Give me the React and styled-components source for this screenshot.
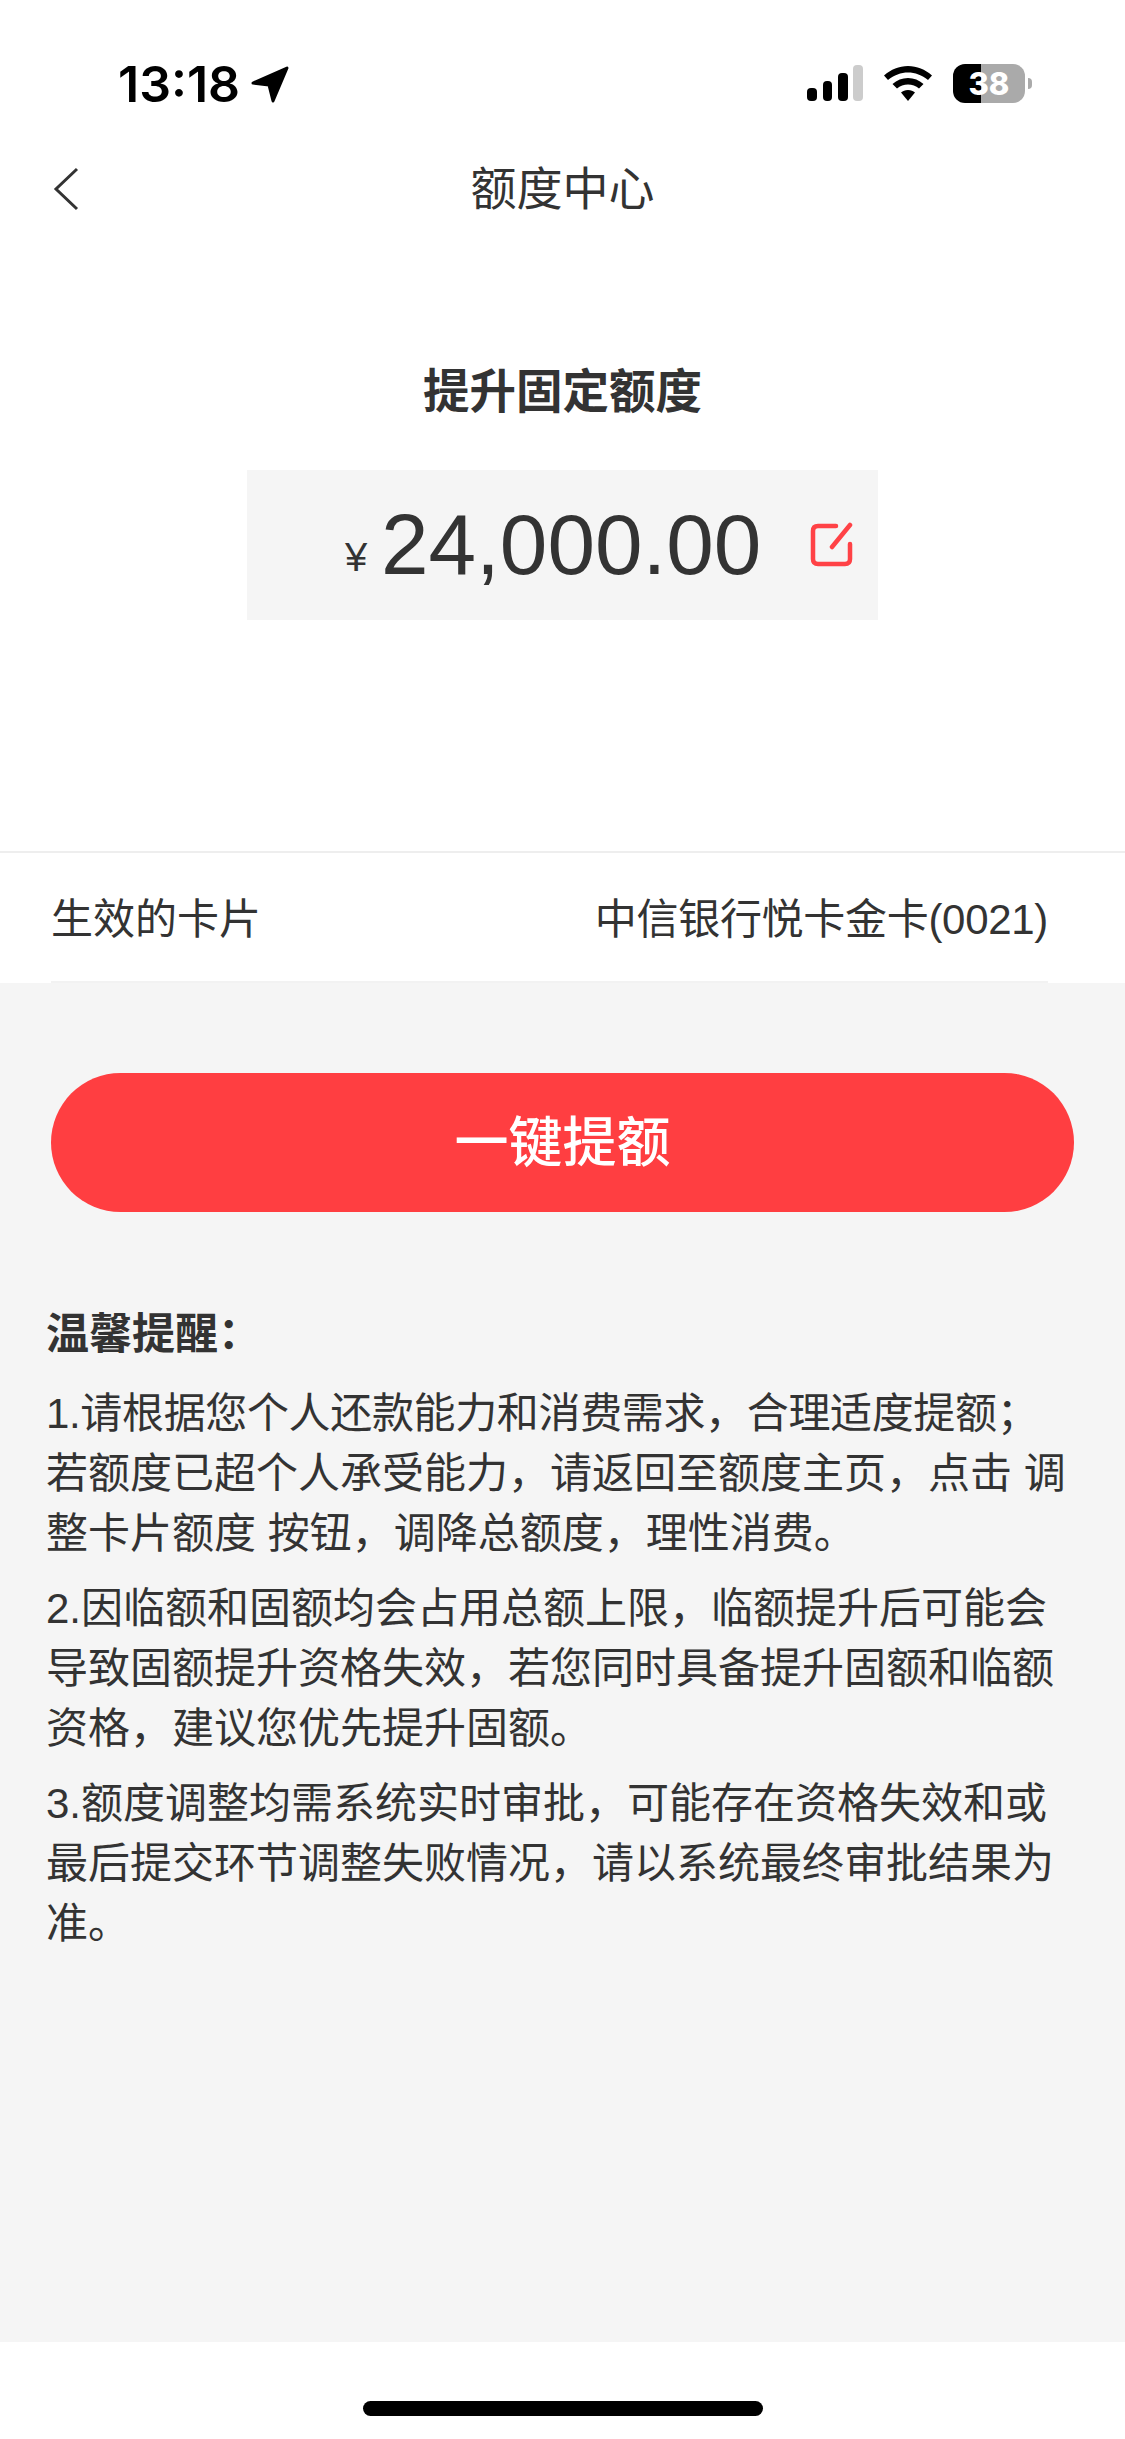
import React from "react";
import styled, { createGlobalStyle } from "styled-components";

const GlobalStyle = createGlobalStyle`
  html, body {
    margin: 0;
    padding: 0;
    background: #fff;
  }
  body {
    font-family: "Liberation Sans", "Noto Sans CJK SC", sans-serif;
    color: #333;
  }
`;

const Page = styled.div`
  width: 1125px;
  height: 2439px;
  display: flex;
  flex-direction: column;
  overflow: hidden;
  background: #fff;
`;

const StatusBar = styled.div`
  height: 146px;
  padding: 0 93px 0 118px;
  box-sizing: border-box;
  display: flex;
  justify-content: space-between;
  align-items: flex-start;
`;

const TimeGroup = styled.div`
  margin-top: 58px;
  display: flex;
  align-items: center;
  gap: 11px;
`;

const Time = styled.span`
  font-family: Inter, "Liberation Sans", sans-serif;
  font-size: 50px;
  line-height: 52px;
  font-weight: 600;
  color: #000;
`;

const StatusIcons = styled.div`
  margin-top: 64px;
  display: flex;
  align-items: center;
  gap: 21px;
`;

const BatteryWrap = styled.div`
  display: flex;
  align-items: center;
  gap: 3px;
`;

const Battery = styled.div`
  width: 72px;
  height: 39px;
  border-radius: 12px;
  background: linear-gradient(90deg, #000 39%, #aaa 39%);
  display: flex;
  align-items: center;
  justify-content: center;
  font-family: Inter, "Liberation Sans", sans-serif;
  font-size: 31px;
  font-weight: 800;
  color: #fff;
`;

const BatteryNub = styled.div`
  width: 4px;
  height: 11px;
  background: #aaa;
  border-radius: 0 5px 5px 0;
`;

const NavBar = styled.div`
  height: 84px;
  padding-bottom: 6px;
  box-sizing: border-box;
  position: relative;
  display: flex;
  align-items: center;
  justify-content: center;
`;

const BackIcon = styled.svg`
  position: absolute;
  left: 53px;
  top: 21px;
`;

const NavTitle = styled.div`
  font-size: 46px;
  font-weight: 400;
  color: #333;
`;

const Hero = styled.div`
  padding-top: 134px;
  height: 623px;
  box-sizing: border-box;
  display: flex;
  flex-direction: column;
  align-items: center;
  border-bottom: 2px solid #eeeeee;
`;

const HeroTitle = styled.div`
  font-size: 46.5px;
  line-height: 56px;
  font-weight: 700;
  color: #333;
`;

const AmountBox = styled.div`
  margin-top: 50px;
  width: 631px;
  height: 150px;
  background: #f5f5f5;
  display: flex;
  align-items: center;
  box-sizing: border-box;
  padding-left: 98px;
`;

const Currency = styled.span`
  font-size: 40px;
  line-height: 1;
  color: #333;
  margin-top: 24px;
  width: 36px;
`;

const Amount = styled.span`
  font-size: 85.5px;
  line-height: 1;
  color: #333;
`;

const EditIcon = styled.svg`
  margin-left: 48px;
  flex: none;
`;

const CardSection = styled.div`
  height: 130px;
  padding: 0 77px 0 51px;
  background: #fff;
`;

const CardRow = styled.div`
  height: 125px;
  padding-bottom: 3px;
  display: flex;
  justify-content: space-between;
  align-items: center;
  border-bottom: 2px solid #f2f2f2;
  font-size: 42px;
  color: #333;
`;

const CardValue = styled.span`
  letter-spacing: -0.3px;
`;

const Content = styled.div`
  flex: 1;
  background: #f5f5f5;
  padding-top: 90px;
  display: flex;
  flex-direction: column;
`;

const ActionButton = styled.button`
  margin: 0 51px;
  height: 139px;
  padding: 0 0 9px;
  border: none;
  border-radius: 70px;
  background: #ff3e41;
  color: #fff;
  font-family: inherit;
  font-size: 54px;
  font-weight: 500;
`;

const Tips = styled.div`
  margin-top: 92px;
  padding: 0 55px 0 46px;
`;

const TipTitle = styled.div`
  font-size: 43px;
  line-height: 60px;
  font-weight: 700;
  color: #333;
  margin-bottom: 20px;
`;

const TipText = styled.p`
  margin: 0 0 15px;
  font-size: 42px;
  line-height: 60px;
  color: #333;

  &::first-line {
    letter-spacing: ${(props) => props.$firstLineSpacing || 0}px;
  }
`;

const HomeArea = styled.div`
  height: 97px;
  display: flex;
  justify-content: center;
  padding-top: 59px;
  box-sizing: border-box;
`;

const HomeBar = styled.div`
  width: 400px;
  height: 15px;
  border-radius: 8px;
  background: #000;
`;

const tips = [
  {
    text: "1.请根据您个人还款能力和消费需求\uFF0C合理适度提额\uFF1B若额度已超个人承受能力\uFF0C请返回至额度主页\uFF0C点击 调整卡片额度 按钮\uFF0C调降总额度\uFF0C理性消费\u3002",
    spacing: -0.35,
  },
  {
    text: "2.因临额和固额均会占用总额上限\uFF0C临额提升后可能会导致固额提升资格失效\uFF0C若您同时具备提升固额和临额资格\uFF0C建议您优先提升固额\u3002",
  },
  {
    text: "3.额度调整均需系统实时审批\uFF0C可能存在资格失效和或最后提交环节调整失败情况\uFF0C请以系统最终审批结果为准\u3002",
  },
];

const App = () => {
  return (
    <Page>
      <GlobalStyle />
      <StatusBar>
        <TimeGroup>
          <Time>13:18</Time>
          <svg width="38" height="37" viewBox="0 0 38 37">
            <path
              d="M2 17 L36 2 L22 35 L18 19 Z"
              fill="#000"
              stroke="#000"
              strokeWidth="3"
              strokeLinejoin="round"
            />
          </svg>
        </TimeGroup>
        <StatusIcons>
          <svg width="56" height="37" viewBox="0 0 56 37">
            <rect x="0" y="23" width="10" height="13" rx="4" fill="#000" />
            <rect x="16" y="16" width="9" height="20" rx="4" fill="#000" />
            <rect x="31" y="8" width="10" height="28" rx="4" fill="#000" />
            <rect x="46" y="0" width="10" height="36" rx="4" fill="#ccc" />
          </svg>
          <svg width="48" height="36" viewBox="0 0 48 36">
            <path d="M24 0C15 0 7 3.500 0 9.500L4 14C10 9 17 6.500 24 6.500S38 9 44 14L48 9.500C41 3.500 33 0 24 0Z" fill="#000" />
            <path d="M24 12C18 12 13 14 8.500 18L13 22.500C16 20 20 18.500 24 18.500S32 20 35 22.500L39.500 18C35 14 30 12 24 12Z" fill="#000" />
            <path d="M24 24C21 24 19 25 17 26.500L24 35L31 26.500C29 25 27 24 24 24Z" fill="#000" />
          </svg>
          <BatteryWrap>
            <Battery>38</Battery>
            <BatteryNub />
          </BatteryWrap>
        </StatusIcons>
      </StatusBar>
      <NavBar>
        <BackIcon width="26" height="44" viewBox="0 0 26 44">
          <path d="M24 2 L3 22 L24 42" fill="none" stroke="#333" strokeWidth="3" />
        </BackIcon>
        <NavTitle>额度中心</NavTitle>
      </NavBar>
      <Hero>
        <HeroTitle>提升固定额度</HeroTitle>
        <AmountBox>
          <Currency>¥</Currency>
          <Amount>24,000.00</Amount>
          <EditIcon width="46" height="46" viewBox="0 0 46 46">
            <path
              d="M27 4 H9 Q4 4 4 9 V37 Q4 42 9 42 H36 Q41 42 41 37 V22"
              fill="none"
              stroke="#ff4246"
              strokeWidth="4.500"
              strokeLinecap="round"
            />
            <path d="M41 3 L23 25" fill="none" stroke="#ff4246" strokeWidth="4.500" strokeLinecap="round" />
          </EditIcon>
        </AmountBox>
      </Hero>
      <CardSection>
        <CardRow>
          <span>生效的卡片</span>
          <CardValue>中信银行悦卡金卡(0021)</CardValue>
        </CardRow>
      </CardSection>
      <Content>
        <ActionButton>一键提额</ActionButton>
        <Tips>
          <TipTitle>{"温馨提醒\uFF1A"}</TipTitle>
          {tips.map((tip) => (
            <TipText key={tip.text} $firstLineSpacing={tip.spacing}>
              {tip.text}
            </TipText>
          ))}
        </Tips>
      </Content>
      <HomeArea>
        <HomeBar />
      </HomeArea>
    </Page>
  );
};

export default App;
